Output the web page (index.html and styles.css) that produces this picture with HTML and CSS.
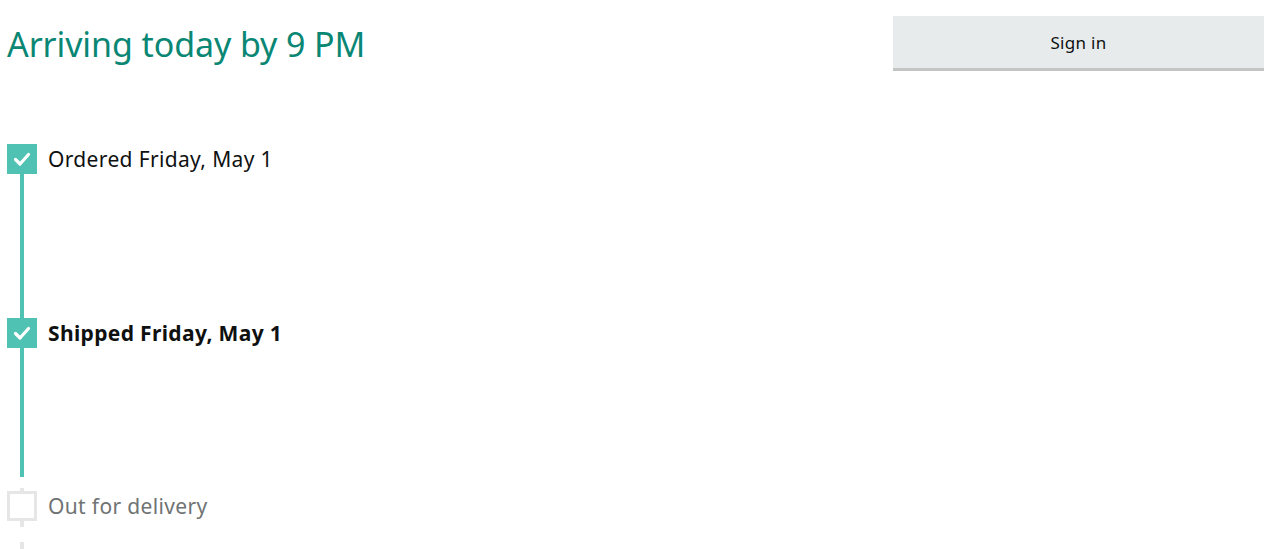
FILE: index.html
```html
<!DOCTYPE html>
<html>
<head>
<meta charset="utf-8">
<link rel="stylesheet" href="styles.css">
</head>
<body>
<div class="page">
  <div class="main">
    <h1 class="title">Arriving today by 9 PM</h1>
    <div class="timeline">
      <div class="step done">
        <div class="marker"><svg viewBox="0 0 30 30" width="30" height="30"><path d="M8.5 15.5 L13 20 L21.5 10.5" fill="none" stroke="#fff" stroke-width="3.2" stroke-linecap="round" stroke-linejoin="round"/></svg></div>
        <div class="label">Ordered Friday, May 1</div>
      </div>
      <div class="connector long1"></div>
      <div class="step done">
        <div class="marker"><svg viewBox="0 0 30 30" width="30" height="30"><path d="M8.5 15.5 L13 20 L21.5 10.5" fill="none" stroke="#fff" stroke-width="3.2" stroke-linecap="round" stroke-linejoin="round"/></svg></div>
        <div class="label bold">Shipped Friday, May 1</div>
      </div>
      <div class="connector long2"></div>
      <div class="gap"></div>
      <div class="tick"></div>
      <div class="step pending">
        <div class="marker empty"></div>
        <div class="label muted">Out for delivery</div>
      </div>
      <div class="tick tick2"></div>
      <div class="gap2"></div>
      <div class="tick tick3"></div>
    </div>
  </div>
  <div class="side">
    <button class="signin">Sign in</button>
  </div>
</div>
</body>
</html>
```
FILE: styles.css
```css
html, body {
  margin: 0;
  padding: 0;
  background: #fff;
  overflow: hidden;
}
body {
  font-family: "Noto Sans", "Open Sans", sans-serif;
  color: #0f1111;
}
.page {
  display: flex;
  padding: 16px 16px 0 7px;
}
.main {
  flex: 1;
}
.title {
  margin: 0;
  font-weight: 400;
  font-size: 34px;
  line-height: 56px;
  color: #0a8774;
  letter-spacing: -0.1px;
}
.timeline {
  margin-top: 72px;
  display: flex;
  flex-direction: column;
}
.step {
  display: flex;
  align-items: center;
  height: 30px;
}
.marker {
  width: 30px;
  height: 30px;
  background: #50c2b3;
  flex: none;
}
.marker svg {
  display: block;
}
.marker.empty {
  background: #fff;
  box-sizing: border-box;
  border: 3px solid #e6e6e6;
}
.label {
  margin-left: 11px;
  font-size: 21px;
  line-height: 30px;
  letter-spacing: 0.35px;
  margin-top: -1px;
}
.bold {
  font-weight: 700;
}
.muted {
  color: #6f7373;
}
.connector {
  width: 4px;
  margin-left: 13px;
  background: #50c2b3;
}
.long1 { height: 144px; }
.long2 { height: 129px; }
.gap { height: 11px; }
.tick {
  width: 4px;
  height: 3px;
  margin-left: 13px;
  background: #e6e6e6;
}
.tick2 { height: 6px; }
.gap2 { height: 15px; }
.tick3 { height: 10px; }
.side {
  width: 371px;
  flex: none;
}
.signin {
  display: block;
  width: 100%;
  height: 55px;
  border: 0;
  border-bottom: 3px solid #c3c5c5;
  background: #e8ebec;
  font-family: "Noto Sans", "Open Sans", sans-serif;
  font-size: 17px;
  letter-spacing: 0.3px;
  color: #0f1111;
  padding: 0;
  box-sizing: border-box;
}
```
